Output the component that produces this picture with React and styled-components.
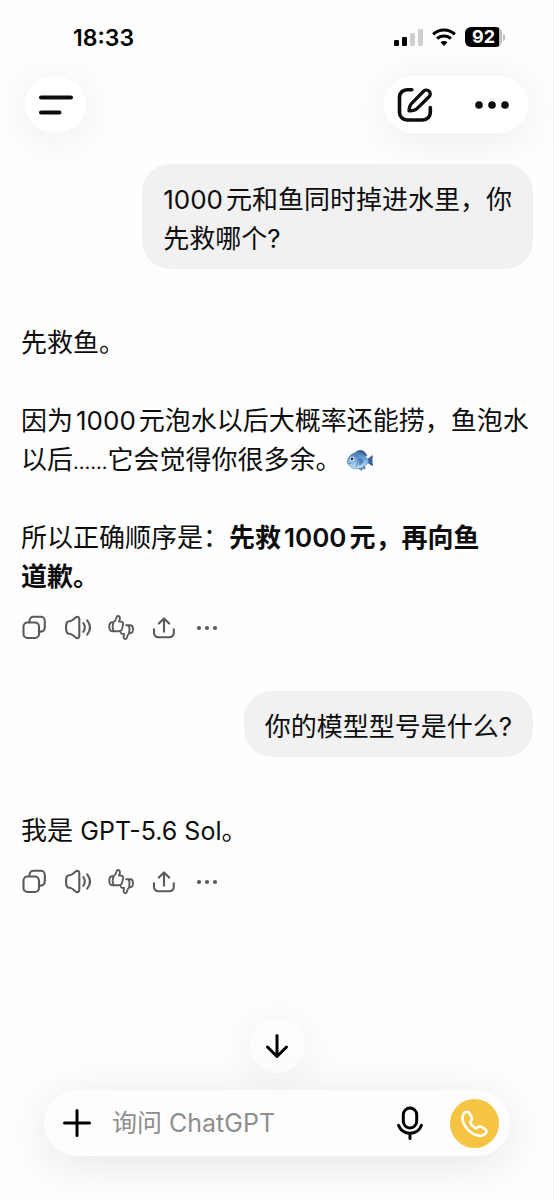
import React from "react";
import styled, { createGlobalStyle } from "styled-components";

const GlobalStyle = createGlobalStyle`
  *, *::before, *::after { box-sizing: border-box; }
  body {
    margin: 0;
    background: #fefefe;
    color: #0d0d0d;
    font-family: Inter, "Noto Sans CJK SC", sans-serif;
  }
  button, input { font: inherit; color: inherit; }
  button { border: 0; padding: 0; background: none; cursor: pointer; }
  svg { display: block; overflow: visible; }
`;

const Screen = styled.div`
  min-height: 100vh;
  display: flex;
  flex-direction: column;
  border-right: 1px solid #f0f0f0;
`;

const StatusBar = styled.div`
  display: flex;
  justify-content: space-between;
  align-items: center;
  height: 76px;
  padding: 0 48px 0 73px;
  color: #000;
`;

const Clock = styled.time`
  font-size: 23px;
  line-height: 28px;
  font-weight: 600;
`;

const Indicators = styled.div`
  display: flex;
  align-items: center;
  gap: 9px;
  padding-bottom: 2px;
`;

const Battery = styled.div`
  display: flex;
  align-items: center;
  gap: 1px;
`;

const BatteryBody = styled.span`
  width: 37px;
  height: 20px;
  border-radius: 6px;
  background: linear-gradient(90deg, #000 92%, #bdbdbd 92%);
  color: #fff;
  font-size: 18px;
  line-height: 20px;
  font-weight: 700;
  text-align: center;
`;

const BatteryNub = styled.span`
  width: 2px;
  height: 7px;
  border-radius: 0 2px 2px 0;
  background: #bdbdbd;
`;

const Header = styled.header`
  display: flex;
  justify-content: space-between;
  padding: 0 25px;
`;

const Floating = styled.div`
  display: flex;
  align-items: center;
  background: #fff;
  box-shadow: 0 6px 48px rgba(0, 0, 0, 0.08);
`;

const MenuPill = styled(Floating)`
  width: 61px;
  height: 57px;
  border-radius: 50%;
`;

const ActionsPill = styled(Floating)`
  height: 57px;
  padding: 0 18px 0 13px;
  gap: 41px;
  border-radius: 29px;
`;

const IconButton = styled.button`
  display: flex;
  align-items: center;
  justify-content: center;
  flex: none;
  width: ${(p) => p.$w}px;
  height: ${(p) => p.$h || p.$w}px;
`;

const Chat = styled.main`
  flex: 1;
  display: flex;
  flex-direction: column;
  padding: 31px 20px 40px 21px;
  font-size: 26px;
  line-height: 39px;
`;

const Bubble = styled.div`
  align-self: flex-end;
  padding: 16px 21px 11px;
  border-radius: 28px;
  background: #f1f1f1;
`;

const Reply = styled.article`
  display: flex;
  flex-direction: column;
  gap: 39px;
  padding: 54px 0 19px;
  white-space: nowrap;
`;

const Paragraph = styled.p`
  margin: 0;
`;

const Strong = styled.strong`
  font-weight: 600;
`;

const Latin = styled.span`
  font-size: 25px;
  line-height: 1;
`;

const Figure = styled.span`
  margin-right: 3px;
  margin-left: ${(p) => (p.$lead ? 0 : 3)}px;
`;

const Ellipsis = styled.span`
  font-size: 20px;
  line-height: 1;
`;

const Emoji = styled.svg`
  display: inline-block;
  vertical-align: -3px;
  margin-left: 4px;
`;

const Toolbar = styled.div`
  display: flex;
  gap: 17px;
  color: #5a5a5a;
  margin-bottom: ${(p) => (p.$last ? 0 : 50)}px;
`;

const Dock = styled.footer`
  position: sticky;
  bottom: 0;
  display: flex;
  flex-direction: column;
  align-items: center;
  gap: 17px;
  padding: 0 43px 44px 44px;
`;

const ScrollPill = styled(Floating)`
  border-radius: 50%;
  background: #fdfdfd;
  color: #000;
`;

const Composer = styled.form`
  display: flex;
  align-items: center;
  align-self: stretch;
  height: 66px;
  padding: 0 11px 0 17px;
  border-radius: 33px;
  background: #fdfdfd;
  box-shadow: 0 8px 48px rgba(0, 0, 0, 0.1);
  color: #000;
`;

const Prompt = styled.input`
  flex: 1;
  min-width: 0;
  margin: 0 16px 0 19px;
  padding: 0;
  border: 0;
  outline: 0;
  background: none;
  font-size: 25px;
  line-height: 32px;
  &::placeholder { color: #8e8e8e; opacity: 1; }
`;

const CallButton = styled(IconButton)`
  margin-left: 23px;
  border-radius: 50%;
  background: #f5c443;
  color: #fff;
`;

function Icon({ w, h = w, stroke = 2.1, children }) {
  return (
    <svg
      width={w}
      height={h}
      viewBox={`0 0 ${w} ${h}`}
      fill="none"
      stroke="currentColor"
      strokeWidth={stroke}
      strokeLinecap="round"
      strokeLinejoin="round"
      aria-hidden="true"
    >
      {children}
    </svg>
  );
}

function Dots({ w, h = w, xs, r }) {
  return (
    <Icon w={w} h={h}>
      {xs.map((x) => (
        <circle key={x} cx={x} cy={h / 2} r={r} fill="currentColor" stroke="none" />
      ))}
    </Icon>
  );
}

function Fish() {
  return (
    <Emoji width="28" height="24" viewBox="0 0 28 24" role="img" aria-label="🐟">
      <defs>
        <linearGradient id="fishBody" x1="0" y1="0" x2="0" y2="1">
          <stop offset="0" stopColor="#4777ac" />
          <stop offset="0.45" stopColor="#78aede" />
          <stop offset="1" stopColor="#c5e0f5" />
        </linearGradient>
      </defs>
      <path d="M9 5C11 1.6 15 1 18 3.2c2 1.5 3 3.3 3.5 5.3z" fill="#3e639a" />
      <path d="M10 19l6 4 .5-2.500 3 1-.500-4z" fill="#527aae" />
      <path d="M19.500 12.500c2-.8 4.200-4 7.500-5.500-.8 3.600-.8 7.600.2 11-3.200-.6-5-3.500-7.700-4.500z" fill="#3e5e96" />
      <path d="M1 13.500C2.500 7.500 7 4.300 12 4.500c5 .3 8 4.200 11 8.800-3 4.400-6.600 7.700-12 7.700-4.500 0-8.500-2.800-10-7.500z" fill="url(#fishBody)" stroke="#4e78aa" strokeWidth=".6" />
      <path d="M10.500 6.500c1.800 3 2 8.500-.5 12.500" fill="none" stroke="#507fb6" strokeWidth="1" />
      <path d="M12 10.500c3-1.500 5.500 0 5.300 2.500-.2 2-2.300 3.800-4.300 4.500.5-2.500.2-4.700-1-7z" fill="#527fb9" />
      <circle cx="6.200" cy="10.800" r="2.300" fill="#eef6fb" />
      <circle cx="6" cy="10.800" r="1.400" fill="#172132" />
      <path d="M1.500 15.500c1.500.3 2.500 0 3.500-.7" fill="none" stroke="#537ba8" strokeWidth=".8" />
    </Emoji>
  );
}

function MessageTools({ last }) {
  return (
    <Toolbar $last={last}>
      <IconButton $w={26} type="button" aria-label="复制">
        <Icon w={26}>
          <rect x="2.500" y="7.500" width="15.500" height="15.500" rx="4" />
          <path d="M8.500 7.300V5.800a4 4 0 0 1 4-4h7.300a4 4 0 0 1 4 4v6.800a4 4 0 0 1-4 4h-1.600" />
        </Icon>
      </IconButton>
      <IconButton $w={26} type="button" aria-label="朗读">
        <Icon w={26}>
          <path d="M5.300 6.200c1.400 0 2.500-.6 3.600-1.500l2.700-2.200c1.600-1.200 3.700-.6 3.700 1.400v17.200c0 2-2.100 2.600-3.700 1.400l-2.700-2.200c-1.100-.9-2.200-1.500-3.600-1.500-2.200 0-3.300-1.700-3.300-6.300s1.100-6.300 3.300-6.300z" />
          <path d="M19.300 8.200c1.900 2.600 1.900 6 0 8.600M23.200 5.400c3.500 4.400 3.500 9.800 0 14.200" />
        </Icon>
      </IconButton>
      <IconButton $w={26} type="button" aria-label="评价">
        <Icon w={26} stroke={1.9}>
          <path d="M6.500 7.200C8.600 5.800 9.200 4 9.700 1.900c.4-1.500 3.200-1.400 3.200 1.200 0 1.300-.4 2.400-.8 3.500h1.800c1.500 0 2.500 1 2.200 2.500l-1 4.500c-.4 1.700-1.400 2.600-3.200 2.600H5.200c-1.600 0-2.900-1.700-2.900-4.400 0-2.800 1.300-4.600 2.900-4.600h1.300zM6.500 7.200c-1 2.600-1 6.300 0 9" />
          <path d="M19.200 10.200h3.900c1.700 0 2.900 1.500 2.900 3.900s-1.100 4.200-2.700 4.200h-1c-1.600 1.100-2.100 2.800-2.500 4.600-.4 1.900-3.200 1.700-3.200-.7 0-1.200.2-2.300.6-3.300h-1.800c-1 0-1.500-.6-1.500-1.500M21.800 10.400c.9 2.300.9 5.300.3 7.700" />
        </Icon>
      </IconButton>
      <IconButton $w={26} type="button" aria-label="分享">
        <Icon w={26}>
          <path d="M4 14.300v3.700a4.300 4.300 0 0 0 4.300 4.300h11.200a4.300 4.300 0 0 0 4.300-4.300v-3.700M14 16.800V3.600M8.800 8.600L14 3.400l5.200 5.200" />
        </Icon>
      </IconButton>
      <IconButton $w={26} type="button" aria-label="更多操作">
        <Dots w={26} xs={[6, 14, 22]} r={2.1} />
      </IconButton>
    </Toolbar>
  );
}

function PhoneStatus() {
  return (
    <StatusBar>
      <Clock>18:33</Clock>
      <Indicators>
        <svg width="29" height="18" viewBox="0 0 29 18" aria-hidden="true">
          <rect x="0" y="12" width="5" height="6" rx="1.300" />
          <rect x="8" y="9" width="5" height="9" rx="1.300" />
          <rect x="16" y="5" width="5" height="13" rx="1.300" fill="#cfcfcf" />
          <rect x="24" y="1" width="5" height="17" rx="1.300" fill="#cfcfcf" />
        </svg>
        <svg width="24" height="18" viewBox="0 0 24 18" fill="none" stroke="#000" strokeWidth="3" aria-hidden="true">
          <path d="M1.100 6.400a15.600 15.600 0 0 1 21.800 0M5.100 10.700a9.900 9.900 0 0 1 13.800 0" />
          <path d="M12 18l-3.500-3.700a5.100 5.100 0 0 1 7 0z" fill="#000" stroke="none" />
        </svg>
        <Battery>
          <BatteryBody>92</BatteryBody>
          <BatteryNub />
        </Battery>
      </Indicators>
    </StatusBar>
  );
}

export default function App() {
  return (
    <>
      <GlobalStyle />
      <Screen>
        <PhoneStatus />
        <Header>
          <MenuPill>
            <IconButton $w={61} $h={57} type="button" aria-label="菜单">
              <Icon w={34} h={20} stroke={4}>
                <path d="M2 2.500h30M2 17.500h18.500" />
              </Icon>
            </IconButton>
          </MenuPill>
          <ActionsPill>
            <IconButton $w={36} type="button" aria-label="新聊天">
              <Icon w={36} stroke={3.6}>
                <path d="M14.800 2.700H10A7.500 7.500 0 0 0 2.500 10.200V25.500A7.500 7.500 0 0 0 10 33h15.800a7.500 7.500 0 0 0 7.500-7.500v-5" />
                <path d="M12 23.800c.1-3 .6-5.300 2.700-7.400L26.800 4a3.900 3.900 0 0 1 5.500 5.500L20 21.600c-2 1.900-4.600 2.300-8 2.200z" stroke="currentColor" strokeWidth="3.300" />
              </Icon>
            </IconButton>
            <IconButton $w={36} type="button" aria-label="更多">
              <Dots w={36} xs={[5, 18, 31]} r={3.8} />
            </IconButton>
          </ActionsPill>
        </Header>

        <Chat>
          <Bubble>
            <Figure $lead>1000</Figure>元和鱼同时掉进水里，你
            <br />
            先救哪个?
          </Bubble>
          <Reply>
            <Paragraph>先救鱼。</Paragraph>
            <Paragraph>
              因为<Figure>1000</Figure>元泡水以后大概率还能捞，鱼泡水
              <br />
              以后<Ellipsis>……</Ellipsis>它会觉得你很多余。
              <Fish />
            </Paragraph>
            <Paragraph>
              所以正确顺序是：
              <Strong>
                先救<Figure>1000</Figure>元，再向鱼
                <br />
                道歉。
              </Strong>
            </Paragraph>
          </Reply>
          <MessageTools />
          <Bubble>你的模型型号是什么?</Bubble>
          <Reply>
            <Paragraph>
              我是 <Latin>GPT-5.6 Sol</Latin>。
            </Paragraph>
          </Reply>
          <MessageTools last />
        </Chat>

        <Dock>
          <ScrollPill>
            <IconButton $w={55} type="button" aria-label="滚动到底部">
              <Icon w={22} h={24} stroke={3}>
                <path d="M11 1.500v20.500M1.500 13l9.500 9.500 9.500-9.500" />
              </Icon>
            </IconButton>
          </ScrollPill>
          <Composer onSubmit={(e) => e.preventDefault()}>
            <IconButton $w={32} type="button" aria-label="添加">
              <Icon w={28} stroke={3}>
                <path d="M14 1.500v25M1.500 14h25" />
              </Icon>
            </IconButton>
            <Prompt placeholder="询问 ChatGPT" aria-label="询问 ChatGPT" />
            <IconButton $w={34} type="button" aria-label="语音输入">
              <Icon w={26} h={34} stroke={3}>
                <rect x="6.300" y="2" width="13.400" height="20" rx="6.700" />
                <path d="M1.500 19.300c2 5 6 8 11.500 8s9.500-3 11.500-8M13 27.500v5" />
              </Icon>
            </IconButton>
            <CallButton $w={49} type="button" aria-label="语音通话">
              <Icon w={27} stroke={2.6}>
                <path d="M3.700 2.700C5.200 1.200 7.400 1.500 8.500 3.300l2 3.700c.8 1.500.6 2.500-.6 3.800-.8.900-.9 1.500-.3 2.500 1.200 2 2.500 3.300 4.400 4.500 1 .6 1.700.5 2.500-.3 1.300-1.200 2.300-1.400 3.800-.6l3.500 1.900c1.900 1.100 2.200 3.300.6 4.800-2.700 2.700-6.400 2.800-10.300 1-5.100-2.300-9.300-6.500-11.500-11.400-1.700-3.900-1.600-7.800 1.100-10.500z" />
              </Icon>
            </CallButton>
          </Composer>
        </Dock>
      </Screen>
    </>
  );
}
